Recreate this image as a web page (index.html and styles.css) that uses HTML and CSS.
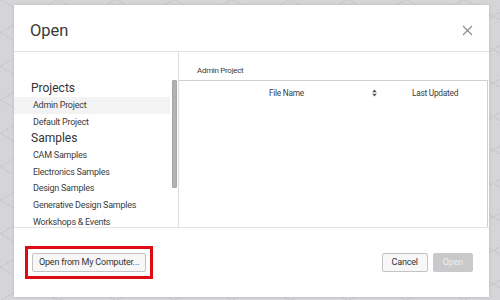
FILE: index.html
```html
<!DOCTYPE html>
<html lang="en">

<head>
    <meta charset="UTF-8">
    <meta name="viewport" content="width=device-width, initial-scale=1.0">
    <title>Open</title>
    <link rel="stylesheet" href="styles.css">
</head>

<body>
    <div class="dialog">
        <div class="dialog-header">
            <div class="dialog-title">Open</div>
            <div class="close-btn">
                <svg width="11" height="11" viewBox="0 0 11 11">
                    <path d="M1 1 L10 10 M10 1 L1 10" stroke="#8a8a8a" stroke-width="1.1" fill="none" />
                </svg>
            </div>
        </div>

        <div class="dialog-body">
            <div class="sidebar">
                <div class="sidebar-list">
                    <div class="group-title">Projects</div>
                    <div class="item active">Admin Project</div>
                    <div class="item">Default Project</div>
                    <div class="group-title">Samples</div>
                    <div class="item">CAM Samples</div>
                    <div class="item">Electronics Samples</div>
                    <div class="item">Design Samples</div>
                    <div class="item">Generative Design Samples</div>
                    <div class="item">Workshops &amp; Events</div>
                </div>
                <div class="scroll-thumb"></div>
            </div>

            <div class="content">
                <div class="breadcrumb">Admin Project</div>
                <div class="file-table">
                    <div class="table-head">
                        <div class="col-name">
                            <span>File Name</span>
                            <svg class="sort-icon" width="5" height="8" viewBox="0 0 5 8">
                                <path d="M2.5 0.5 L4.8 3.2 L0.2 3.2 Z M2.5 7.5 L4.8 4.8 L0.2 4.8 Z" fill="#555" />
                            </svg>
                        </div>
                        <div class="col-date">Last Updated</div>
                    </div>
                </div>
            </div>
        </div>

        <div class="dialog-footer">
            <div class="highlight-box">
                <div class="button">Open from My Computer...</div>
            </div>
            <div class="footer-actions">
                <div class="button">Cancel</div>
                <div class="button disabled">Open</div>
            </div>
        </div>
    </div>
</body>

</html>
```

FILE: styles.css
```css
body {
    margin: 0;
    width: 500px;
    height: 300px;
    overflow: hidden;
    font-family: Roboto, "Noto Sans", sans-serif;
    color: #3c3c3c;
    background-color: #d5d5d7;
    background-image:
        repeating-linear-gradient(30deg, transparent 0, transparent 28px, #c9c9cc 28px, #c9c9cc 29px),
        repeating-linear-gradient(150deg, transparent 0, transparent 28px, #c9c9cc 28px, #c9c9cc 29px);
}

.dialog {
    margin: 5px 0 0 14px;
    width: 475px;
    height: 292px;
    background-color: #fff;
    display: flex;
    flex-direction: column;
    box-shadow: 0 0 3px rgba(0, 0, 0, 0.12);
}

.dialog-header {
    height: 46px;
    border-bottom: 1px solid #e3e3e3;
    display: flex;
    align-items: center;
    justify-content: space-between;
    padding: 0 16px 0 16px;
    flex-shrink: 0;
}

.dialog-title {
    font-size: 16.5px;
    color: #3a3a3a;
    padding-top: 4px;
}

.close-btn {
    display: flex;
    padding-top: 5px;
}

.dialog-body {
    height: 175px;
    display: flex;
    border-bottom: 1px solid #e3e3e3;
    flex-shrink: 0;
}

.sidebar {
    width: 164px;
    padding-top: 28px;
    border-right: 1px solid #dcdcdc;
    flex-shrink: 0;
    position: relative;
}

.sidebar-list {
    height: 147px;
    overflow: hidden;
}

.scroll-thumb {
    position: absolute;
    top: 28px;
    right: 1px;
    width: 3px;
    height: 106px;
    background-color: #b3b1b5;
    border: 1px solid #a9a7ab;
    border-radius: 1px;
}

.group-title {
    font-size: 12px;
    height: 17px;
    line-height: 17px;
    padding-left: 17px;
    color: #333;
}

.item {
    font-size: 9px;
    letter-spacing: -0.25px;
    height: 16.6px;
    line-height: 16.6px;
    padding-left: 19px;
    margin-right: 8px;
    white-space: nowrap;
}

.item.active {
    background-color: #f3f3f3;
}

.content {
    flex: 1;
    display: flex;
    flex-direction: column;
    padding-right: 1px;
}

.breadcrumb {
    height: 28px;
    line-height: 38px;
    font-size: 8px;
    letter-spacing: -0.3px;
    padding-left: 18px;
}

.file-table {
    flex: 1;
    border-top: 1px solid #cfcfcf;
    border-right: 1px solid #cfcfcf;
}

.table-head {
    display: flex;
    height: 24px;
    align-items: center;
    font-size: 8.3px;
    letter-spacing: -0.25px;
}

.col-name {
    width: 215px;
    display: flex;
    align-items: center;
    padding-left: 90px;
    box-sizing: border-box;
}

.sort-icon {
    margin-left: auto;
    margin-right: 17px;
}

.col-date {
    padding-left: 18px;
}

.dialog-footer {
    flex: 1;
    display: flex;
    justify-content: space-between;
    align-items: flex-start;
    padding: 18px 16px 0 11px;
}

.highlight-box {
    border: 3px solid #e00b12;
    padding: 4px 4px;
}

.footer-actions {
    display: flex;
    gap: 5px;
    padding-top: 7px;
}

.button {
    height: 17px;
    line-height: 17px;
    padding: 0 9px;
    font-size: 9px;
    letter-spacing: -0.2px;
    border: 1px solid #c3c3c3;
    border-radius: 2px;
    background-color: #f7f7f7;
    color: #333;
    white-space: nowrap;
}

.highlight-box .button {
    padding: 0 6px;
}

.button.disabled {
    background-color: #c9c9cb;
    border-color: #c9c9cb;
    color: #eeeeee;
}
```
